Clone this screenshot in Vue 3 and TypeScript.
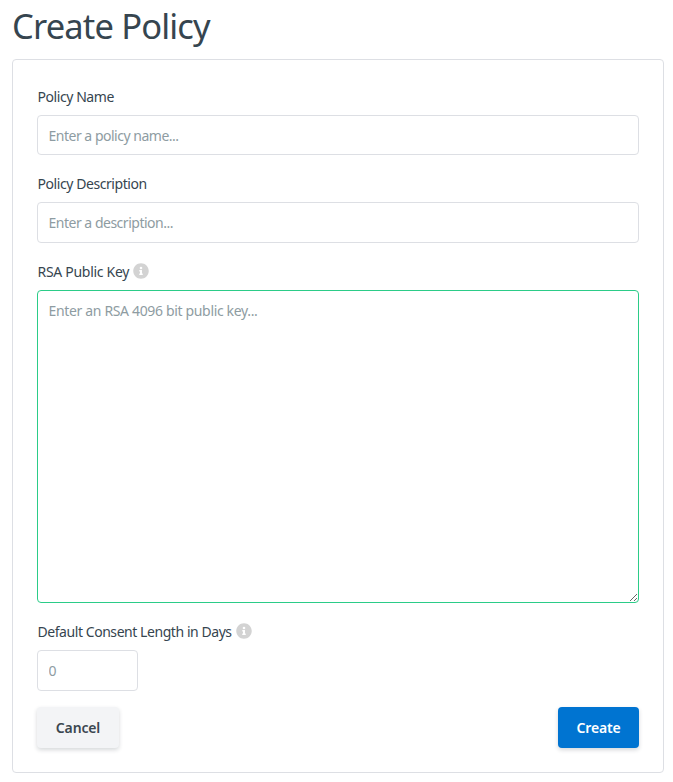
<script setup lang="ts">
import { ref } from 'vue'

const name = ref('')
const description = ref('')
const publicKey = ref('')
const consentDays = ref('')
</script>

<template>
  <main class="page">
    <h1 class="title">Create Policy</h1>
    <form class="card" @submit.prevent>
      <div class="field">
        <label for="name"><span>Policy Name</span></label>
        <input id="name" v-model="name" class="control name" type="text" placeholder="Enter a policy name..." />
      </div>
      <div class="field">
        <label for="description"><span>Policy Description</span></label>
        <input id="description" v-model="description" class="control" type="text" placeholder="Enter a description..." />
      </div>
      <div class="field">
        <label for="key">
          <span class="key-label">RSA Public Key</span>
          <svg class="info" viewBox="0 0 512 512"><path fill="currentColor" d="M256 8C119 8 8 119 8 256s111 248 248 248 248-111 248-248S393 8 256 8zm0 110a42 42 0 1 1 0 84 42 42 0 0 1 0-84zm56 254c0 7-5 12-12 12h-88c-7 0-12-5-12-12v-24c0-7 5-12 12-12h12v-64h-12c-7 0-12-5-12-12v-24c0-7 5-12 12-12h64c7 0 12 5 12 12v100h12c7 0 12 5 12 12v24z" /></svg>
        </label>
        <textarea id="key" v-model="publicKey" class="control key" placeholder="Enter an RSA 4096 bit public key..."></textarea>
      </div>
      <div class="field">
        <label for="days">
          <span class="days-label">Default Consent Length in Days</span>
          <svg class="info" viewBox="0 0 512 512"><path fill="currentColor" d="M256 8C119 8 8 119 8 256s111 248 248 248 248-111 248-248S393 8 256 8zm0 110a42 42 0 1 1 0 84 42 42 0 0 1 0-84zm56 254c0 7-5 12-12 12h-88c-7 0-12-5-12-12v-24c0-7 5-12 12-12h12v-64h-12c-7 0-12-5-12-12v-24c0-7 5-12 12-12h64c7 0 12 5 12 12v100h12c7 0 12 5 12 12v24z" /></svg>
        </label>
        <input id="days" v-model="consentDays" class="control days" type="text" placeholder="0" />
      </div>
      <div class="actions">
        <button type="button" class="btn cancel">Cancel</button>
        <button type="submit" class="btn create">Create</button>
      </div>
    </form>
  </main>
</template>

<style>
body {
  background: #fff;
}
</style>

<style scoped>
.page {
  box-sizing: border-box;
  height: 782px;
  padding: 0 9px 9px 12px;
  font-family: 'Noto Sans', 'Open Sans', sans-serif;
  font-size: 14px;
  color: #3b4351;
}
.title {
  margin: 0;
  height: 59px;
  line-height: 52px;
  font-size: 34.5px;
  font-weight: 400;
  letter-spacing: -0.84px;
  color: #36454f;
}
.card {
  box-sizing: border-box;
  height: 714px;
  padding: 24px;
  border: 1px solid #dddfe4;
  border-radius: 4px;
}
.field {
  display: flex;
  flex-direction: column;
  align-items: flex-start;
  margin-bottom: 16px;
}
label {
  display: flex;
  align-items: center;
  gap: 4px;
  height: 26px;
  margin-bottom: 5px;
  padding-left: 0.5px;
  line-height: 26px;
  white-space: nowrap;
  letter-spacing: -0.43px;
  color: #36454f;
}
.key-label {
  letter-spacing: -0.29px;
}
.days-label {
  letter-spacing: -0.44px;
}
.info {
  width: 16px;
  height: 16px;
  margin-top: -2px;
  color: #d3d3d3;
}
.control {
  box-sizing: border-box;
  display: block;
  width: 100%;
  height: 41px;
  margin: 0;
  padding: 0 10.5px;
  border: 1px solid #dddfe4;
  border-radius: 4px;
  background: #fff;
  outline: none;
  font: inherit;
  letter-spacing: -0.49px;
  color: #3b4351;
}
.control::placeholder {
  color: #8e9ca2;
  opacity: 1;
}
.name {
  height: 40px;
}
.key {
  height: 313px;
  padding: 10px 10.5px;
  line-height: 20px;
  letter-spacing: -0.34px;
  border-color: #2bcc88;
  resize: both;
}
.days {
  width: 101px;
}
.actions {
  display: flex;
  justify-content: space-between;
}
.btn {
  box-sizing: border-box;
  height: 41px;
  padding: 0;
  border: 0;
  border-radius: 4px;
  font: inherit;
  font-weight: 600;
  letter-spacing: -0.15px;
  box-shadow: 0 2px 4px rgba(30, 40, 50, 0.18);
}
.cancel {
  width: 82px;
  background: #f3f4f6;
  color: #3b4750;
}
.create {
  width: 81px;
  background: #0074d1;
  color: #fff;
}
</style>
